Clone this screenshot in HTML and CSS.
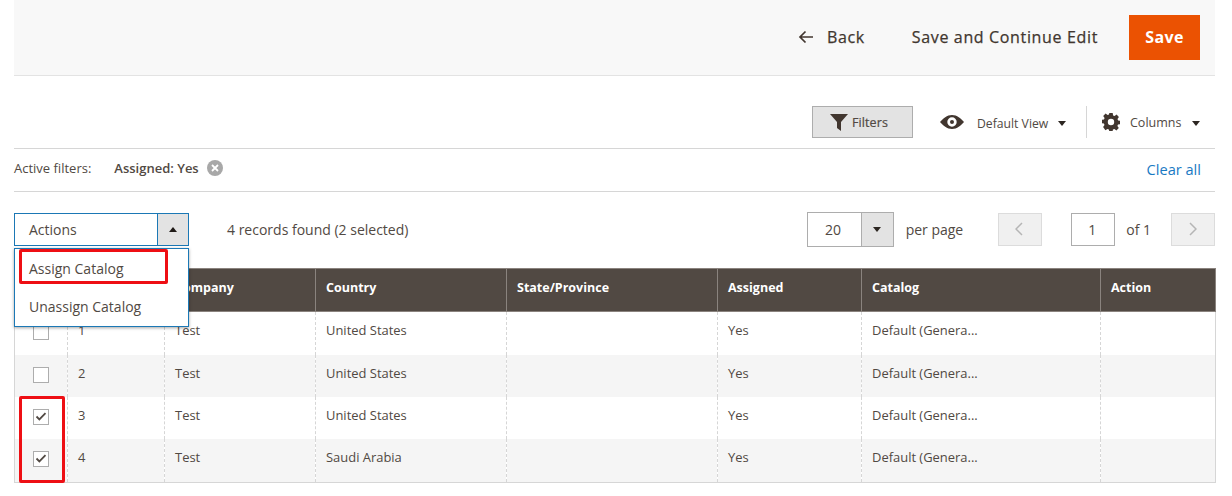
FILE: index.html
```html
<!DOCTYPE html>
<html lang="en">
<head>
<meta charset="utf-8">
<title>Assign Catalog</title>
<link rel="stylesheet" href="styles.css">
</head>
<body>
<header class="page-actions">
  <a class="act back"><svg class="back-icon" width="16" height="14" viewBox="0 0 16 14"><path d="M15 7H2M7.5 1.5 2 7l5.5 5.5" fill="none" stroke="#41362f" stroke-width="1.7"/></svg>Back</a>
  <a class="act cont">Save and Continue Edit</a>
  <button class="save">Save</button>
</header>

<section class="toolbar">
  <button class="filters"><svg width="18" height="17" viewBox="0 0 18 17"><path d="M0 0h18L11 8v9l-4-3V8z" fill="#41362f"/></svg>Filters</button>
  <div class="view"><svg width="24" height="14" viewBox="0 0 24 14"><path fill-rule="evenodd" d="M12 0c5 0 9 3.500 12 7-3 3.500-7 7-12 7S3 10.500 0 7c3-3.500 7-7 12-7zm0 2.300a4.700 4.700 0 1 0 0 9.400 4.700 4.700 0 0 0 0-9.400zM12 5a2 2 0 1 1 0 4 2 2 0 0 1 0-4z" fill="#41362f"/></svg><span class="view-label">Default View</span><i class="caret"></i></div>
  <div class="cols"><svg width="18" height="18" viewBox="0 0 18 18"><path fill-rule="evenodd" d="M7.300 0h3.400l.4 2.400 1.500.6 2-1.400 2.300 2.400-1.400 2 .6 1.500 1.900.3v3.400l-2 .4-.6 1.500 1.400 2-2.400 2.300-2-1.400-1.500.6-.3 1.900H7.300l-.4-2-1.500-.6-2 1.400L1.100 14l1.400-2-.6-1.500L0 10.200V6.800l2-.4.6-1.500-1.400-2 2.400-2.300 2 1.400L7 1.400zM9 5.800a3.200 3.200 0 1 0 0 6.400 3.200 3.200 0 0 0 0-6.400z" fill="#41362f"/></svg><span class="cols-label">Columns</span><i class="caret"></i></div>
</section>

<section class="active-filters">
  <span class="af-label">Active filters:</span>
  <span class="af-value">Assigned: Yes</span>
  <span class="af-remove"><svg width="8" height="8" viewBox="0 0 8 8"><path d="M1 1l6 6M7 1 1 7" stroke="#fff" stroke-width="1.800"/></svg></span>
  <a class="clear">Clear all</a>
</section>

<section class="controls">
  <div class="actions"><span class="actions-label">Actions</span><span class="actions-btn"><i class="caret up"></i></span></div>
  <span class="records">4 records found (2 selected)</span>
  <div class="pager">
    <div class="perpage"><span class="pp-val">20</span><span class="pp-btn"><i class="caret"></i></span></div>
    <span class="pp-label">per page</span>
    <span class="nav prev"><svg width="8" height="14" viewBox="0 0 8 14"><path d="M7 1 1 7l6 6" fill="none" stroke="#b5b5b5" stroke-width="1.500"/></svg></span>
    <span class="page-num">1</span>
    <span class="of">of 1</span>
    <span class="nav next"><svg width="8" height="14" viewBox="0 0 8 14"><path d="M1 1l6 6-6 6" fill="none" stroke="#b5b5b5" stroke-width="1.500"/></svg></span>
  </div>
  <ul class="menu">
    <li>Assign Catalog</li>
    <li>Unassign Catalog</li>
  </ul>
  <div class="mark mark-menu"></div>
</section>

<section class="grid-wrap">
<table class="grid">
  <colgroup>
    <col class="c1"><col class="c2"><col class="c3"><col class="c4"><col class="c5"><col class="c6"><col class="c7"><col class="c8">
  </colgroup>
  <thead>
    <tr><th></th><th></th><th>Company</th><th>Country</th><th>State/Province</th><th>Assigned</th><th>Catalog</th><th>Action</th></tr>
  </thead>
  <tbody>
    <tr class="r1"><td><span class="cb"></span></td><td>1</td><td>Test</td><td>United States</td><td></td><td>Yes</td><td>Default (Genera...</td><td></td></tr>
    <tr class="r2 alt"><td><span class="cb"></span></td><td>2</td><td>Test</td><td>United States</td><td></td><td>Yes</td><td>Default (Genera...</td><td></td></tr>
    <tr class="r3"><td><span class="cb on"><svg width="14" height="11" viewBox="0 0 14 11"><path d="M1.500 5.500 5 9l7.500-7.500" fill="none" stroke="#514943" stroke-width="2.200"/></svg></span></td><td>3</td><td>Test</td><td>United States</td><td></td><td>Yes</td><td>Default (Genera...</td><td></td></tr>
    <tr class="r4 alt"><td><span class="cb on"><svg width="14" height="11" viewBox="0 0 14 11"><path d="M1.500 5.500 5 9l7.500-7.500" fill="none" stroke="#514943" stroke-width="2.200"/></svg></span></td><td>4</td><td>Test</td><td>Saudi Arabia</td><td></td><td>Yes</td><td>Default (Genera...</td><td></td></tr>
  </tbody>
</table>
<div class="mark mark-rows"></div>
</section>
</body>
</html>
```
FILE: styles.css
```css
* { box-sizing: border-box; }
html, body { margin: 0; height: 496px; overflow: hidden; }
body {
  padding: 0 17px 0 14px;
  background: #fff;
  font-family: "Open Sans", "Noto Sans", sans-serif;
  font-size: 13.5px;
  color: #514943;
}
.page-actions {
  height: 76px;
  background: #f8f8f8;
  border-bottom: 1px solid #e3e3e3;
  display: flex;
  align-items: center;
  justify-content: flex-end;
  padding: 0 15px 1px 0;
  font-size: 16px;
  letter-spacing: .65px;
  color: #41362f;
}
.act { display: flex; align-items: center; -webkit-text-stroke: .25px #41362f; }
.back-icon { margin-right: 13px; }
.back { margin-right: 47px; }
.cont { margin-right: 31px; }
.save {
  width: 71px;
  height: 45px;
  border: 0;
  background: #eb5202;
  color: #fff;
  font: 700 16px "Open Sans", sans-serif;
  letter-spacing: .4px;
  padding: 0;
}
.toolbar {
  height: 73px;
  border-bottom: 1px solid #d6d6d6;
  display: flex;
  align-items: flex-start;
  padding-top: 30px;
  padding-left: 798px;
  font-size: 12.500px;
}
.filters {
  width: 101px;
  height: 32px;
  background: #e3e3e3;
  border: 1px solid #adadad;
  display: flex;
  align-items: center;
  gap: 4px;
  padding: 0 0 0 17px;
  font: 400 12.500px "Open Sans", sans-serif;
  letter-spacing: .1px;
  -webkit-text-stroke: .2px #514943;
  color: #514943;
}
.view {
  display: flex;
  align-items: center;
  height: 32px;
  margin-left: 27px;
  width: 146px;
}
.view-label { margin-left: 13px; font-size: 12.200px; padding-top: 2px; }
.view .caret { margin-left: 10px; margin-top: 3px; }
.cols {
  display: flex;
  align-items: center;
  height: 32px;
  border-left: 1px solid #d6d6d6;
  padding-left: 15px;
}
.cols-label { margin-left: 10px; font-size: 12.500px; }
.cols .caret { margin-left: 11px; margin-top: 2px; }
.caret {
  display: inline-block;
  width: 0;
  height: 0;
  border: 4px solid transparent;
  border-top: 5px solid #2c2621;
  border-bottom: 0;
}
.caret.up { border-top: 0; border-bottom: 5px solid #1f1a17; }
.active-filters {
  height: 43px;
  border-bottom: 1px solid #d6d6d6;
  display: flex;
  align-items: center;
  font-size: 13px;
  padding-bottom: 4px;
}
.af-label { margin-right: 23px; }
.af-value { font-weight: 600; }
.af-remove {
  width: 16px;
  height: 16px;
  border-radius: 50%;
  background: #a8a8a8;
  display: flex;
  align-items: center;
  justify-content: center;
  margin-left: 8px;
}
.clear {
  margin-left: auto;
  margin-right: 14px;
  color: #1979c3;
  font-size: 14.600px;
  padding-top: 2px;
}
.controls {
  position: relative;
  height: 76px;
  padding-top: 21px;
  display: flex;
  align-items: flex-start;
}
.actions {
  width: 175px;
  height: 33px;
  border: 1px solid #1b78b5;
  display: flex;
  align-items: stretch;
}
.actions-label { flex: 1; padding: 6px 14px; font-size: 14px; line-height: 20px; }
.actions-btn {
  width: 31px;
  background: #e3e3e3;
  border-left: 1px solid #1b78b5;
  display: flex;
  align-items: center;
  justify-content: center;
}
.records { margin-left: 38px; font-size: 14px; line-height: 33px; }
.pager {
  margin-left: auto;
  display: flex;
  align-items: center;
  height: 33px;
  font-size: 14px;
}
.perpage {
  width: 87px;
  height: 35px;
  border: 1px solid #adadad;
  display: flex;
  margin-right: 12px;
}
.pp-val { flex: 1; padding-right: 2px; text-align: center; line-height: 33px; }
.pp-btn {
  width: 32px;
  background: #e3e3e3;
  border-left: 1px solid #adadad;
  display: flex;
  align-items: center;
  justify-content: center;
}
.pp-label { margin-right: 35px; }
.nav {
  width: 44px;
  height: 33px;
  background: #f0f0f0;
  border: 1px solid #dcdcdc;
  display: flex;
  align-items: center;
  justify-content: center;
  padding-bottom: 1px;
}
.prev { padding-right: 3px; }
.page-num {
  width: 44px;
  height: 33px;
  border: 1px solid #adadad;
  margin-left: 29px;
  margin-right: 11px;
  padding-right: 2px;
  text-align: center;
  line-height: 31px;
}
.of { margin-right: 20px; }
.menu {
  position: absolute;
  left: 0;
  top: 56px;
  width: 175px;
  height: 79px;
  margin: 0;
  padding: 0;
  list-style: none;
  background: #fff;
  border: 1px solid #1b78b5;
  box-shadow: 0 1px 3px rgba(0, 0, 0, .35);
  z-index: 2;
  font-size: 14px;
}
.menu li { height: 38px; padding: 10px 14px 0; line-height: 20px; }
.mark { position: absolute; border: 3px solid #ee0f14; border-radius: 2px; z-index: 3; }
.mark-menu { left: 5px; top: 57px; width: 149px; height: 35px; }
.grid-wrap { position: relative; }
.grid {
  width: 1201px;
  border-collapse: collapse;
  table-layout: fixed;
  border: 1px solid #d6d6d6;
  border-top: 0;
  font-size: 12.950px;
}
.c1 { width: 53px; } .c2 { width: 97px; } .c3 { width: 151px; } .c4 { width: 191px; }
.c5 { width: 211px; } .c6 { width: 144px; } .c7 { width: 239px; } .c8 { width: 115px; }
.grid th {
  height: 43px;
  background: #514943;
  color: #fff;
  font-size: 12.500px;
  font-weight: 700;
  text-align: left;
  padding: 0 10px 5px;
  border: 1px solid #8a837e;
}
.grid td {
  padding: 0 10px 5px;
  border-left: 1px dashed #d6d6d6;
  border-right: 1px dashed #d6d6d6;
  white-space: nowrap;
  overflow: hidden;
}
.grid td:first-child { text-align: center; padding: 0 0 4px; border-left: 1px solid #d6d6d6; }
.grid td:last-child { border-right: 1px solid #d6d6d6; }
.r1 td { height: 43px; }
.r2 td, .r3 td { height: 42px; }
.r4 td { height: 44px; }
.grid .r1 td, .grid .r4 td { padding-bottom: 7px; }
.grid .r1 td:first-child, .grid .r4 td:first-child { padding-bottom: 6px; }
.alt td { background: #f5f5f5; }
.cb {
  display: inline-flex;
  width: 16px;
  height: 16px;
  background: #fff;
  border: 1px solid #adadad;
  vertical-align: middle;
  align-items: center;
  justify-content: center;
}
.cb svg { width: 12px; height: 9px; }
.mark-rows { left: 5px; top: 128px; width: 46px; height: 87px; }
```
